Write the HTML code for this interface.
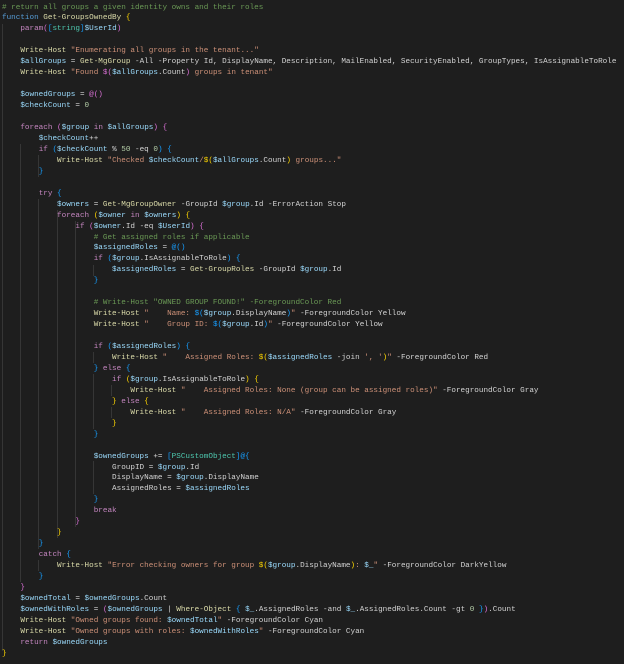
<!DOCTYPE html>
<html><head><meta charset="utf-8"><style>
html,body{margin:0;padding:0;background:#1e1e1e;width:624px;height:664px;overflow:hidden;position:relative}
pre{position:relative;margin:0;padding:2.5px 0 0 2px;font-family:"Liberation Mono",monospace;font-size:7.65px;line-height:10.95px;color:#d4d4d4;white-space:pre}
.c{color:#6a9955}.kw{color:#569cd6}.k{color:#c586c0}.f{color:#dcdcaa}.v{color:#9cdcfe}.s{color:#ce9178}.n{color:#b5cea8}.t{color:#4ec9b0}
.a{color:#ffd700}.b{color:#da70d6}.d{color:#179fff}
.g{position:absolute;width:1px;background:#363636}
</style></head><body>
<div class="g" style="left:2px;top:24px;height:627px"></div>
<div class="g" style="left:20px;top:144px;height:438px"></div>
<div class="g" style="left:38px;top:155px;height:22px"></div>
<div class="g" style="left:38px;top:199px;height:350px"></div>
<div class="g" style="left:38px;top:560px;height:11px"></div>
<div class="g" style="left:57px;top:210px;height:328px"></div>
<div class="g" style="left:75px;top:221px;height:306px"></div>
<div class="g" style="left:93px;top:265px;height:11px"></div>
<div class="g" style="left:93px;top:352px;height:11px"></div>
<div class="g" style="left:93px;top:374px;height:55px"></div>
<div class="g" style="left:111px;top:385px;height:11px"></div>
<div class="g" style="left:111px;top:407px;height:11px"></div>
<div class="g" style="left:93px;top:461px;height:33px"></div>
<pre><span class="c"># return all groups a given identity owns and their roles</span>
<span class="kw">function</span> <span class="f">Get-GroupsOwnedBy</span> <span class="a">{</span>
    <span class="k">param</span><span class="b">(</span><span class="d">[</span><span class="t">string</span><span class="d">]</span><span class="v">$UserId</span><span class="b">)</span>

    <span class="f">Write-Host</span> <span class="s">"Enumerating all groups in the tenant..."</span>
    <span class="v">$allGroups</span> = <span class="f">Get-MgGroup</span> -All -Property Id, DisplayName, Description, MailEnabled, SecurityEnabled, GroupTypes, IsAssignableToRole
    <span class="f">Write-Host</span> <span class="s">"Found </span><span class="b">$(</span><span class="v">$allGroups</span>.Count<span class="b">)</span><span class="s"> groups in tenant"</span>

    <span class="v">$ownedGroups</span> = <span class="b">@()</span>
    <span class="v">$checkCount</span> = <span class="n">0</span>

    <span class="k">foreach</span> <span class="b">(</span><span class="v">$group</span> <span class="k">in</span> <span class="v">$allGroups</span><span class="b">)</span> <span class="b">{</span>
        <span class="v">$checkCount</span>++
        <span class="k">if</span> <span class="d">(</span><span class="v">$checkCount</span> % <span class="n">50</span> -eq <span class="n">0</span><span class="d">)</span> <span class="d">{</span>
            <span class="f">Write-Host</span> <span class="s">"Checked </span><span class="v">$checkCount</span><span class="s">/</span><span class="a">$(</span><span class="v">$allGroups</span>.Count<span class="a">)</span><span class="s"> groups..."</span>
        <span class="d">}</span>

        <span class="k">try</span> <span class="d">{</span>
            <span class="v">$owners</span> = <span class="f">Get-MgGroupOwner</span> -GroupId <span class="v">$group</span>.Id -ErrorAction Stop
            <span class="k">foreach</span> <span class="a">(</span><span class="v">$owner</span> <span class="k">in</span> <span class="v">$owners</span><span class="a">)</span> <span class="a">{</span>
                <span class="k">if</span> <span class="b">(</span><span class="v">$owner</span>.Id -eq <span class="v">$UserId</span><span class="b">)</span> <span class="b">{</span>
                    <span class="c"># Get assigned roles if applicable</span>
                    <span class="v">$assignedRoles</span> = <span class="d">@()</span>
                    <span class="k">if</span> <span class="d">(</span><span class="v">$group</span>.IsAssignableToRole<span class="d">)</span> <span class="d">{</span>
                        <span class="v">$assignedRoles</span> = <span class="f">Get-GroupRoles</span> -GroupId <span class="v">$group</span>.Id
                    <span class="d">}</span>

                    <span class="c"># Write-Host "OWNED GROUP FOUND!" -ForegroundColor Red</span>
                    <span class="f">Write-Host</span> <span class="s">"    Name: </span><span class="d">$(</span><span class="v">$group</span>.DisplayName<span class="d">)</span><span class="s">"</span> -ForegroundColor Yellow
                    <span class="f">Write-Host</span> <span class="s">"    Group ID: </span><span class="d">$(</span><span class="v">$group</span>.Id<span class="d">)</span><span class="s">"</span> -ForegroundColor Yellow

                    <span class="k">if</span> <span class="d">(</span><span class="v">$assignedRoles</span><span class="d">)</span> <span class="d">{</span>
                        <span class="f">Write-Host</span> <span class="s">"    Assigned Roles: </span><span class="a">$(</span><span class="v">$assignedRoles</span> -join <span class="s">', '</span><span class="a">)</span><span class="s">"</span> -ForegroundColor Red
                    <span class="d">}</span> <span class="k">else</span> <span class="d">{</span>
                        <span class="k">if</span> <span class="a">(</span><span class="v">$group</span>.IsAssignableToRole<span class="a">)</span> <span class="a">{</span>
                            <span class="f">Write-Host</span> <span class="s">"    Assigned Roles: None (group can be assigned roles)"</span> -ForegroundColor Gray
                        <span class="a">}</span> <span class="k">else</span> <span class="a">{</span>
                            <span class="f">Write-Host</span> <span class="s">"    Assigned Roles: N/A"</span> -ForegroundColor Gray
                        <span class="a">}</span>
                    <span class="d">}</span>

                    <span class="v">$ownedGroups</span> += <span class="d">[</span><span class="t">PSCustomObject</span><span class="d">]</span><span class="d">@{</span>
                        GroupID = <span class="v">$group</span>.Id
                        DisplayName = <span class="v">$group</span>.DisplayName
                        AssignedRoles = <span class="v">$assignedRoles</span>
                    <span class="d">}</span>
                    <span class="k">break</span>
                <span class="b">}</span>
            <span class="a">}</span>
        <span class="d">}</span>
        <span class="k">catch</span> <span class="d">{</span>
            <span class="f">Write-Host</span> <span class="s">"Error checking owners for group </span><span class="a">$(</span><span class="v">$group</span>.DisplayName<span class="a">)</span><span class="s">: </span><span class="v">$_</span><span class="s">"</span> -ForegroundColor DarkYellow
        <span class="d">}</span>
    <span class="b">}</span>
    <span class="v">$ownedTotal</span> = <span class="v">$ownedGroups</span>.Count
    <span class="v">$ownedWithRoles</span> = <span class="b">(</span><span class="v">$ownedGroups</span> | <span class="f">Where-Object</span> <span class="d">{</span> <span class="v">$_</span>.AssignedRoles -and <span class="v">$_</span>.AssignedRoles.Count -gt <span class="n">0</span> <span class="d">}</span><span class="b">)</span>.Count
    <span class="f">Write-Host</span> <span class="s">"Owned groups found: </span><span class="v">$ownedTotal</span><span class="s">"</span> -ForegroundColor Cyan
    <span class="f">Write-Host</span> <span class="s">"Owned groups with roles: </span><span class="v">$ownedWithRoles</span><span class="s">"</span> -ForegroundColor Cyan
    <span class="k">return</span> <span class="v">$ownedGroups</span>
<span class="a">}</span></pre></body></html>
